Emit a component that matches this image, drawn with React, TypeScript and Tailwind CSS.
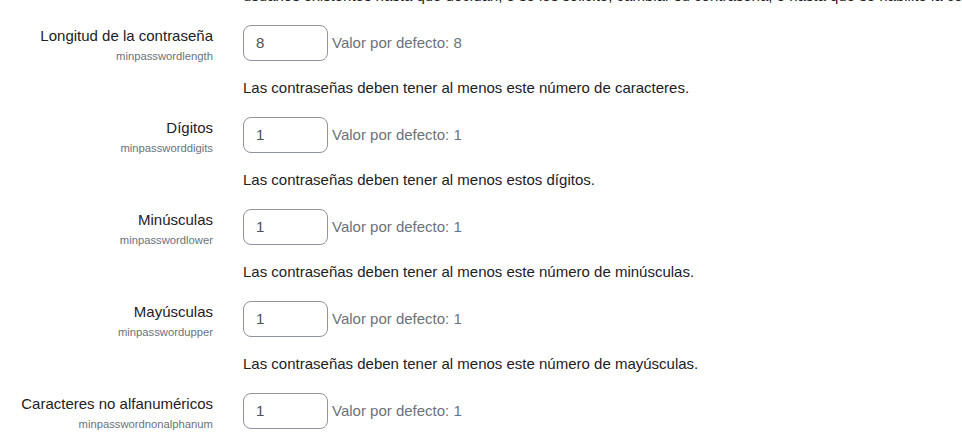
import React from "react"

interface Setting {
  id: string
  label: string
  name: string
  value: string
  description: string
}

const settings: Setting[] = [
  {
    id: "len",
    label: "Longitud de la contraseña",
    name: "minpasswordlength",
    value: "8",
    description: "Las contraseñas deben tener al menos este número de caracteres.",
  },
  {
    id: "digits",
    label: "Dígitos",
    name: "minpassworddigits",
    value: "1",
    description: "Las contraseñas deben tener al menos estos dígitos.",
  },
  {
    id: "lower",
    label: "Minúsculas",
    name: "minpasswordlower",
    value: "1",
    description: "Las contraseñas deben tener al menos este número de minúsculas.",
  },
  {
    id: "upper",
    label: "Mayúsculas",
    name: "minpasswordupper",
    value: "1",
    description: "Las contraseñas deben tener al menos este número de mayúsculas.",
  },
  {
    id: "nonalpha",
    label: "Caracteres no alfanuméricos",
    name: "minpasswordnonalphanum",
    value: "1",
    description: "Las contraseñas deben tener al menos este número de caracteres no alfanuméricos.",
  },
]

const SettingRow: React.FC<{ setting: Setting }> = ({ setting }) => (
  <div className="grid grid-cols-[228px_1fr]">
    <div className="pr-[15px] text-right">
      <div className="leading-[22.5px]">{setting.label}</div>
      <div className="text-[11.25px] leading-[17px] text-[#6a737b]">{setting.name}</div>
    </div>
    <div className="pl-[15px]">
      <div className="flex items-center">
        <input
          type="text"
          defaultValue={setting.value}
          className="h-[36px] w-[85px] rounded-lg border border-[#8f959e] bg-white px-[12px] pb-px text-[15px] text-[#495057] outline-none"
        />
        <span className="ml-[4px] text-[#6a737b]">Valor por defecto: {setting.value}</span>
      </div>
      <p className="mt-4 mb-[17.5px] leading-[22.5px]">{setting.description}</p>
    </div>
  </div>
)

export default function App() {
  return (
    <div className="h-[445px] w-full overflow-hidden bg-white font-['Liberation_Sans',Arial,sans-serif] text-[15px] text-[#1d2125]">
      <p className="-mt-[15px] mb-[17.5px] whitespace-nowrap pl-[243px] leading-[22.5px]">
        usuarios existentes hasta que decidan, o se les solicite, cambiar su contraseña, o hasta que se habilite la comprobación de contraseñas al iniciar sesión.
      </p>
      {settings.map((s) => (
        <SettingRow key={s.id} setting={s} />
      ))}
    </div>
  )
}
